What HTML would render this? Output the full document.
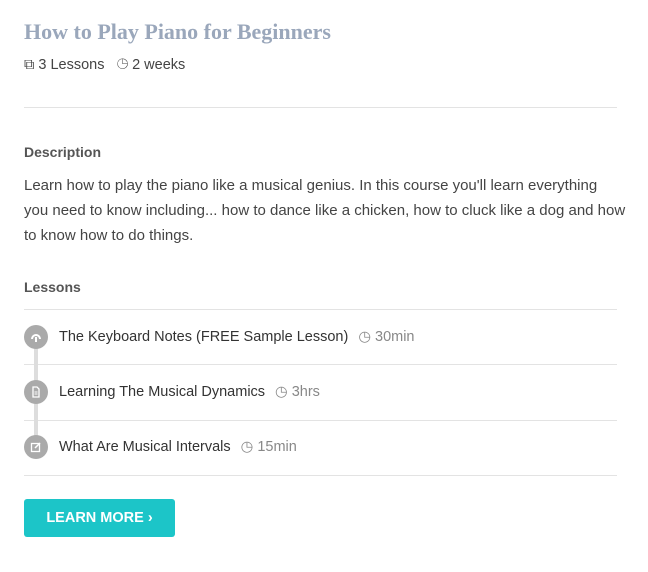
<!DOCTYPE html>
<html><head><style>
body{margin:0;background:#fff;font-family:"Liberation Sans",sans-serif;color:#333;}
h1{position:absolute;left:24px;top:19px;margin:0;font-family:"Liberation Serif",serif;font-weight:bold;font-size:22px;color:#9aa7bb;}
.meta{position:absolute;left:24px;top:57px;font-size:14.5px;color:#444;}
.hr{position:absolute;left:24px;width:593px;height:1px;background:#e3e3e3;}
.h{position:absolute;left:24px;font-size:14px;font-weight:bold;color:#555;}
p{position:absolute;left:24px;top:173px;width:612px;margin:0;font-size:15px;line-height:25px;color:#444;}
.l{position:absolute;left:59px;font-size:14.5px;color:#333;}
.l span{color:#888;margin-left:10px;}
.c{position:absolute;left:24px;width:24px;height:24px;border-radius:50%;background:#aaa;}
.c svg{position:absolute;left:6px;top:6px;}
.btn{position:absolute;left:24px;top:499px;width:151px;height:38px;background:#1cc5c8;border-radius:3px;color:#fff;font-weight:bold;font-size:14.5px;line-height:38px;text-align:center;}
</style></head><body>
<h1>How to Play Piano for Beginners</h1>
<div class="meta">⧉ 3 Lessons &nbsp; ◷ 2 weeks</div>
<div class="hr" style="top:107px"></div>
<div class="h" style="top:144px">Description</div>
<p>Learn how to play the piano like a musical genius. In this course you'll learn everything<br>you need to know including... how to dance like a chicken, how to cluck like a dog and how<br>to know how to do things.</p>
<div class="h" style="top:279px">Lessons</div>
<div class="hr" style="top:309px"></div>
<div class="hr" style="top:364px"></div>
<div class="hr" style="top:420px"></div>
<div class="hr" style="top:475px"></div>
<div style="position:absolute;left:34px;top:340px;width:4px;height:110px;background:#ddd"></div>
<div class="c" style="top:325px"><svg width="12" height="12" viewBox="0 0 12 12"><path d="M2 8 A4 4 0 1 1 10 8" stroke="#fff" stroke-width="2" fill="none"/><rect x="5" y="6" width="2" height="5" fill="#fff"/></svg></div>
<div class="c" style="top:380px"><svg width="12" height="12" viewBox="0 0 12 12"><path d="M3 1h4l2 2v8H3z" stroke="#fff" stroke-width="1.3" fill="none"/><path d="M4.5 6h3M4.5 8h3" stroke="#fff"/></svg></div>
<div class="c" style="top:435px"><svg width="12" height="12" viewBox="0 0 12 12"><rect x="1.5" y="2.5" width="8" height="8" stroke="#fff" stroke-width="1.3" fill="none"/><path d="M5 7l5-5" stroke="#fff" stroke-width="1.5"/></svg></div>
<div class="l" style="top:329px">The Keyboard Notes (FREE Sample Lesson)<span>◷ 30min</span></div>
<div class="l" style="top:384px">Learning The Musical Dynamics<span>◷ 3hrs</span></div>
<div class="l" style="top:439px">What Are Musical Intervals<span>◷ 15min</span></div>
<div class="btn">LEARN MORE ›</div>
</body></html>
